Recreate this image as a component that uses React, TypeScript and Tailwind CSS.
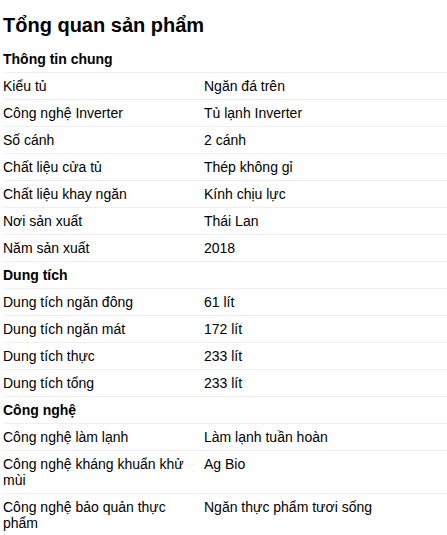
import React from "react";

type Row = [string, string];

interface Section {
  title: string;
  rows: Row[];
}

const sections: Section[] = [
  {
    title: "Thông tin chung",
    rows: [
      ["Kiểu tủ", "Ngăn đá trên"],
      ["Công nghệ Inverter", "Tủ lạnh Inverter"],
      ["Số cánh", "2 cánh"],
      ["Chất liệu cửa tủ", "Thép không gỉ"],
      ["Chất liệu khay ngăn", "Kính chịu lực"],
      ["Nơi sản xuất", "Thái Lan"],
      ["Năm sản xuất", "2018"],
    ],
  },
  {
    title: "Dung tích",
    rows: [
      ["Dung tích ngăn đông", "61 lít"],
      ["Dung tích ngăn mát", "172 lít"],
      ["Dung tích thực", "233 lít"],
      ["Dung tích tổng", "233 lít"],
    ],
  },
  {
    title: "Công nghệ",
    rows: [
      ["Công nghệ làm lạnh", "Làm lạnh tuần hoàn"],
      ["Công nghệ kháng khuẩn khử mùi", "Ag Bio"],
      ["Công nghệ bảo quản thực phẩm", "Ngăn thực phẩm tươi sống"],
    ],
  },
];

export default function App() {
  return (
    <div
      className="min-h-screen bg-white pl-[3px] text-black"
      style={{ fontFamily: '"Liberation Sans", Arial, sans-serif' }}
    >
      <h2 className="pt-[13px] pb-[9px] text-[20px] font-bold leading-[24px]">
        Tổng quan sản phẩm
      </h2>

      {sections.map((section) => (
        <div key={section.title}>
          <div className="border-b border-[#eee] py-[5px] text-[14px] font-bold leading-4">
            {section.title}
          </div>
          {section.rows.map(([label, value]) => (
            <div
              key={label}
              className="grid grid-cols-[201px_1fr] border-b border-[#eee] py-[5px] text-[14px] leading-4"
            >
              <div className="pr-[12px]">{label}</div>
              <div>{value}</div>
            </div>
          ))}
        </div>
      ))}
    </div>
  );
}
